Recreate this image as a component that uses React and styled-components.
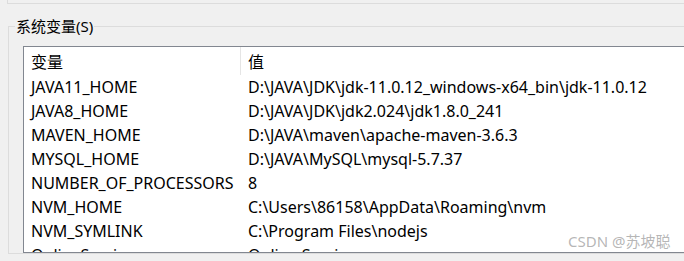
import React from 'react';
import styled, { createGlobalStyle } from 'styled-components';

const GlobalStyle = createGlobalStyle`
  html, body {
    margin: 0;
    padding: 0;
    overflow: hidden;
    background: #f0f0f0;
  }
  body {
    font-family: "Noto Sans", "Noto Sans CJK SC", sans-serif;
    font-size: 16px;
    color: #000;
  }
`;

const Page = styled.div`
  width: 684px;
  height: 261px;
  overflow: hidden;
  position: relative;
`;

const PrevPanel = styled.div`
  height: 3px;
  margin-left: 7px;
  border-left: 1px solid #dcdcdc;
  border-bottom: 1px solid #dcdcdc;
`;

const Group = styled.fieldset`
  margin: 13px 0 0 8px;
  padding: 11px 0 0 14px;
  border: 1px solid #dcdcdc;
  border-right: none;
  min-width: 0;
`;

const Legend = styled.legend`
  padding: 0 1px;
  margin-left: -8px;
  font-size: 15px;
  line-height: 18px;
`;

const List = styled.div`
  width: 700px;
  height: 205px;
  background: #fff;
  border: 1px solid #828790;
  border-right: none;
  overflow: hidden;
`;

const Row = styled.div`
  display: grid;
  grid-template-columns: 217px 1fr;
  height: ${(p) => (p.$head ? 28 : 24)}px;
  align-items: center;
  white-space: nowrap;
`;

const Cell = styled.div`
  height: 100%;
  display: flex;
  align-items: center;
  padding-left: 7px;
  border-right: ${(p) => (p.$sep ? '1px solid #e5e5e5' : 'none')};
`;

const Watermark = styled.div`
  position: absolute;
  left: 568px;
  top: 230px;
  font-size: 15px;
  color: rgba(150, 150, 150, 0.7);
  white-space: nowrap;
`;

const vars = [
  ['JAVA11_HOME', 'D:\\JAVA\\JDK\\jdk-11.0.12_windows-x64_bin\\jdk-11.0.12'],
  ['JAVA8_HOME', 'D:\\JAVA\\JDK\\jdk2.024\\jdk1.8.0_241'],
  ['MAVEN_HOME', 'D:\\JAVA\\maven\\apache-maven-3.6.3'],
  ['MYSQL_HOME', 'D:\\JAVA\\MySQL\\mysql-5.7.37'],
  ['NUMBER_OF_PROCESSORS', '8'],
  ['NVM_HOME', 'C:\\Users\\86158\\AppData\\Roaming\\nvm'],
  ['NVM_SYMLINK', 'C:\\Program Files\\nodejs'],
  ['OnlineServices', 'Online Services'],
];

export default function App() {
  return (
    <Page>
      <GlobalStyle />
      <PrevPanel />
      <Group>
        <Legend>系统变量(S)</Legend>
        <List>
          <Row $head>
            <Cell $sep>变量</Cell>
            <Cell>值</Cell>
          </Row>
          {vars.map(([name, value]) => (
            <Row key={name}>
              <Cell>{name}</Cell>
              <Cell>{value}</Cell>
            </Row>
          ))}
        </List>
      </Group>
      <Watermark>CSDN @苏坡聪</Watermark>
    </Page>
  );
}
